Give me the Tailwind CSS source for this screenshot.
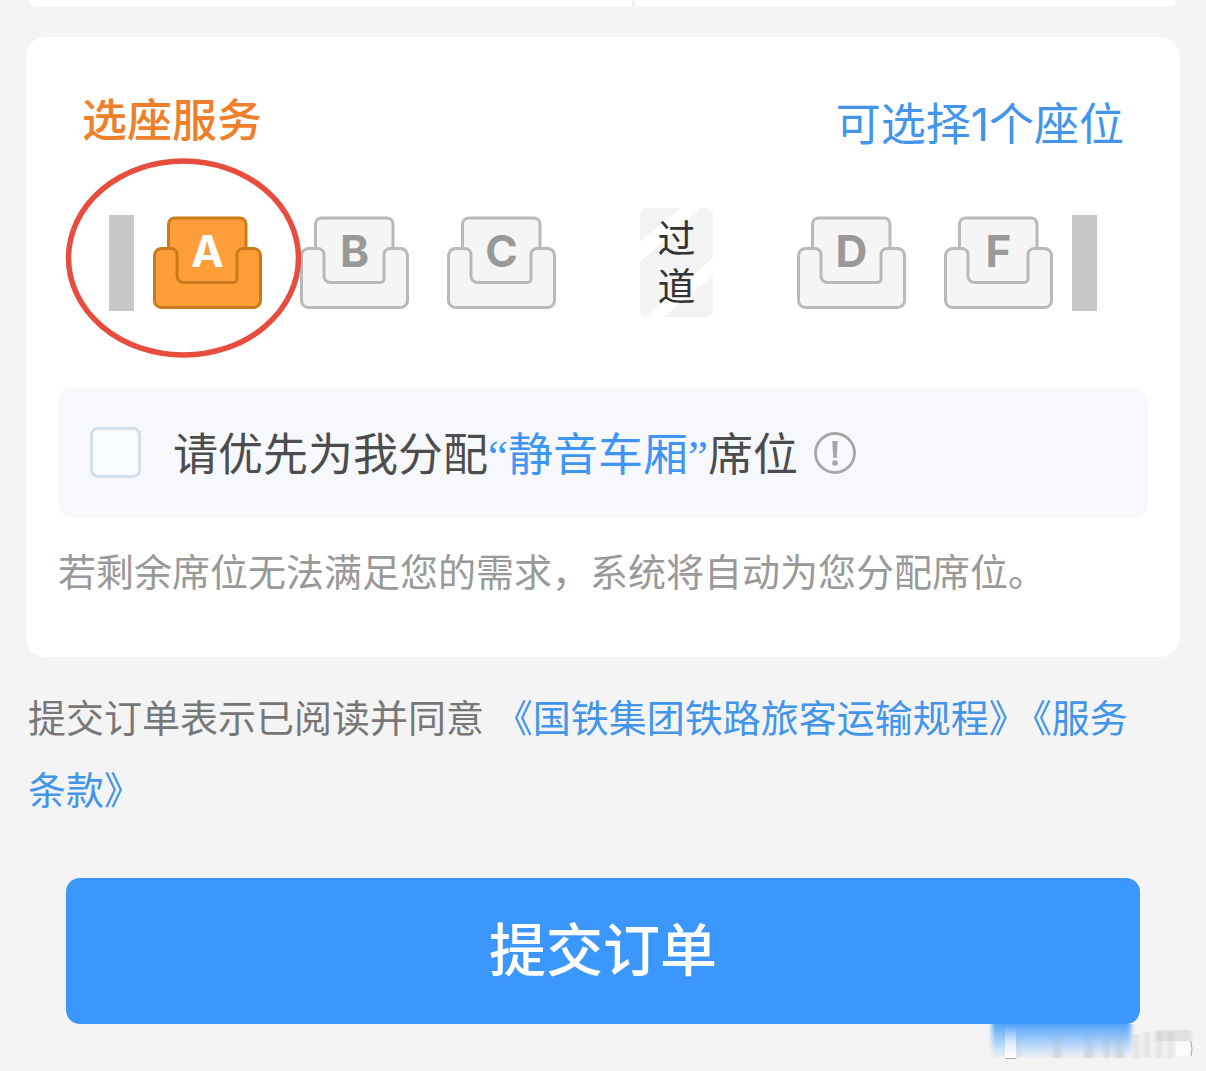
<!DOCTYPE html>
<html lang="zh-CN">
<head>
  <meta charset="UTF-8" />
  <meta name="viewport" content="width=device-width, initial-scale=1" />
  <title>选座服务</title>
  <script src="https://cdn.jsdelivr.net/npm/@tailwindcss/browser@4"></script>
  <style>
    body {
      font-family: 'Inter', 'Noto Sans CJK SC', sans-serif;
    }
  </style>
</head>
<body class="bg-[#f4f4f4] min-h-screen overflow-x-hidden">
  <!-- seat outline shared by all seat buttons -->
  <svg class="hidden" aria-hidden="true">
    <symbol id="seat" viewBox="0 0 109 94">
      <path d="M15.500 33V8a6 6 0 0 1 6-6H87a6 6 0 0 1 6 6V33L84 68H24Z" />
      <path d="M8.500 32.500H18a6 6 0 0 1 6 6V60a6.500 6.500 0 0 0 6.500 6.500H80a4 4 0 0 0 4-4V38.500a6 6 0 0 1 6-6H100.500a7 7 0 0 1 7 7V84.500a7 7 0 0 1-7 7H8.500a7 7 0 0 1-7-7V39.500a7 7 0 0 1 7-7Z" />
    </symbol>
  </svg>

  <div class="mx-[30px] h-[7px] bg-white rounded-b-2xl flex">
    <div class="w-[605px] border-r-3 border-[#f0f0f0]"></div>
  </div>

  <main>
    <section class="mx-[26px] mt-[30px] bg-white rounded-[20px] px-8 pt-[54px] pb-[57px]">
      <div class="flex items-start justify-between px-6 text-[45px]">
        <h1 class="leading-[60px] font-medium text-[#ee7f2b]">选座服务</h1>
        <p class="leading-[68px] text-[#4295ea]">可选择1个座位</p>
      </div>

      <div class="flex items-center justify-between mt-[49px] px-[51px]">
        <div class="relative flex items-center gap-[38px]">
          <div class="flex items-center gap-[19px]">
            <div class="w-[25px] h-24 bg-[#c8c8c8]"></div>
            <button type="button" aria-pressed="true" class="grid w-[109px] h-[94px] text-[44px] leading-[70px] font-bold text-white">
              <svg class="col-start-1 row-start-1 w-full h-[94px] fill-[#ff9d3a] stroke-[#cb7a1b] stroke-3"><use href="#seat" /></svg>
              <span class="col-start-1 row-start-1">A</span>
            </button>
          </div>
          <button type="button" aria-pressed="false" class="grid w-[109px] h-[94px] text-[44px] leading-[70px] font-bold text-[#999]">
            <svg class="col-start-1 row-start-1 w-full h-[94px] fill-[#f5f5f5] stroke-[#b9b9b9] stroke-3"><use href="#seat" /></svg>
            <span class="col-start-1 row-start-1">B</span>
          </button>
          <button type="button" aria-pressed="false" class="grid w-[109px] h-[94px] text-[44px] leading-[70px] font-bold text-[#999]">
            <svg class="col-start-1 row-start-1 w-full h-[94px] fill-[#f5f5f5] stroke-[#b9b9b9] stroke-3"><use href="#seat" /></svg>
            <span class="col-start-1 row-start-1">C</span>
          </button>
          <!-- red ring round the window seat -->
          <svg class="absolute -left-[45px] -top-[56px] w-[240px] h-[204px] overflow-visible pointer-events-none" viewBox="0 0 240 204" fill="none" aria-hidden="true">
            <ellipse cx="119.500" cy="99" rx="115" ry="97" stroke="#e74c3c" stroke-width="5.500" />
          </svg>
        </div>

        <div class="grid w-[73px] h-[109px] rounded-md overflow-hidden bg-[#f3f3f3]">
          <svg class="col-start-1 row-start-1" viewBox="0 0 73 109" fill="#fff" aria-hidden="true">
            <path d="M0 34 40 0H60L0 54ZM73 50V67L24 109H6Z" />
          </svg>
          <p class="col-start-1 row-start-1 justify-self-center w-[38px] pt-1.5 text-[38px] leading-[48px] text-[#333]">过道</p>
        </div>

        <div class="flex items-center gap-[38px]">
          <button type="button" aria-pressed="false" class="grid w-[109px] h-[94px] text-[44px] leading-[70px] font-bold text-[#999]">
            <svg class="col-start-1 row-start-1 w-full h-[94px] fill-[#f5f5f5] stroke-[#b9b9b9] stroke-3"><use href="#seat" /></svg>
            <span class="col-start-1 row-start-1">D</span>
          </button>
          <div class="flex items-center gap-[19px]">
            <button type="button" aria-pressed="false" class="grid w-[109px] h-[94px] text-[44px] leading-[70px] font-bold text-[#999]">
              <svg class="col-start-1 row-start-1 w-full h-[94px] fill-[#f5f5f5] stroke-[#b9b9b9] stroke-3"><use href="#seat" /></svg>
              <span class="col-start-1 row-start-1">F</span>
            </button>
            <div class="w-[25px] h-24 bg-[#c8c8c8]"></div>
          </div>
        </div>
      </div>

      <div class="flex items-center mt-[71px] h-[129px] px-8 bg-[#f7f8fc] rounded-[14px]">
        <input type="checkbox" id="quiet" class="appearance-none w-[51px] h-[51px] shrink-0 border-3 border-[#d3dfeb] rounded-lg bg-[#f8fbff] checked:bg-[#3b97fb]" />
        <label for="quiet" class="ml-8 pt-1 font-['Noto_Sans','Noto_Sans_CJK_SC',sans-serif] text-[45px] leading-[60px] text-[#4d4d4d]">请优先为我分配<span class="font-['Liberation_Serif','Noto_Sans_CJK_SC',sans-serif] text-[#3f95f5]">“静音车厢”</span>席位</label>
        <button type="button" aria-label="说明" class="ml-4">
          <svg class="w-[42px] h-[42px]" viewBox="0 0 42 42" fill="none">
            <circle cx="21" cy="21" r="19.500" stroke="#a6a6a6" stroke-width="2.800" />
            <path d="M18.300 9h5.400l-1 17h-3.400Z" fill="#a6a6a6" />
            <circle cx="21" cy="31" r="2.800" fill="#a6a6a6" />
          </svg>
        </button>
      </div>

      <p class="mt-[27px] text-[38px] leading-[56px] text-[#999]">若剩余席位无法满足您的需求，系统将自动为您分配席位。</p>
    </section>

    <p class="mt-[25px] pl-7 pr-14 text-[38px] leading-[72px] text-[#777]">提交订单表示已阅读并同意 <a href="#" class="text-[#4295ea]">《国铁集团铁路旅客运输规程》</a><a href="#" class="ml-1.5 text-[#4295ea]">《服务条款》</a></p>

    <div class="relative mx-[66px] mt-[52px]">
      <button type="submit" class="block w-full h-[146px] rounded-[14px] bg-[#3b97fb] text-[57px] font-medium text-white">提交订单</button>
      <!-- smeared strip under the button corner -->
      <svg class="absolute top-full -right-[58px] w-[210px] h-10 pointer-events-none" viewBox="0 0 210 40" aria-hidden="true">
        <defs>
          <linearGradient id="fade" x1="0" y1="0" x2="0" y2="1">
            <stop offset="0" stop-color="#4a9ffb" />
            <stop offset=".4" stop-color="#8fc3fb" />
            <stop offset=".75" stop-color="#cbe1fa" />
            <stop offset="1" stop-color="#eff2f6" />
          </linearGradient>
          <linearGradient id="gray" x1="0" y1="0" x2="0" y2="1">
            <stop offset="0" stop-color="#999" stop-opacity="0" />
            <stop offset="1" stop-color="#999" stop-opacity=".3" />
          </linearGradient>
          <linearGradient id="light" x1="0" y1="0" x2="0" y2="1">
            <stop offset="0" stop-color="#fff" stop-opacity="0" />
            <stop offset="1" stop-color="#fff" />
          </linearGradient>
          <filter id="soft" x="-10%" y="-10%" width="120%" height="120%">
            <feGaussianBlur stdDeviation="2 0.500" />
          </filter>
        </defs>
        <g filter="url(#soft)">
          <path d="M4 -2H143V34H4Z" fill="url(#fade)" />
          <path d="M29 4h3v30h-3ZM65 4h9v30h-9ZM96 4h10v30H96ZM116 4h6v30h-6ZM127 4h9v30h-9Z" fill="url(#gray)" />
          <path d="M145 10h6v24h-6ZM156 8h6v26h-6ZM168 8h6v26h-6ZM180 8h5v26h-5Z" fill="#b5b5b5" fill-opacity=".3" />
          <path d="M168 6h35v11h-35Z" fill="#bbb" fill-opacity=".35" />
        </g>
        <path d="M17 2h11v32H17Z" fill="url(#light)" />
        <path d="M17 34h11v1H17Z" fill="#aaa" />
        <path d="M188 18h14v14h-14Z" fill="#fff" fill-opacity=".6" />
        <path d="M203 17q2 8 0 15" fill="none" stroke="#aaa" />
      </svg>
    </div>
  </main>
</body>
</html>
